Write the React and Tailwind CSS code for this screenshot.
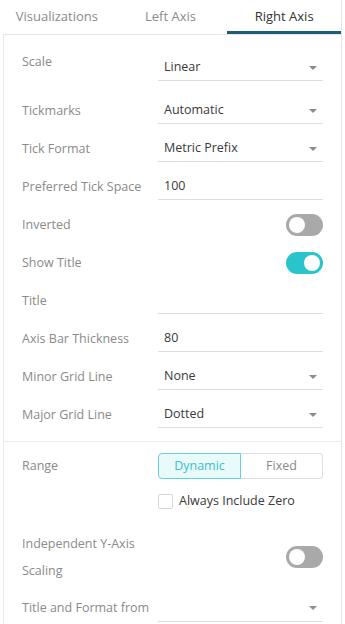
import React from "react";

const Caret = () => (
  <svg width="8" height="4" viewBox="0 0 8 4" className="shrink-0">
    <path d="M0 0 L8 0 L4 4 Z" fill="#8c8c8c" />
  </svg>
);

const Toggle = ({ on }) => (
  <div
    className={`w-[37px] h-[22px] rounded-full flex items-center px-[3px] ${
      on ? "bg-[#2ac5cc] justify-end" : "bg-[#a9a9a9] justify-start"
    }`}
  >
    <div className="w-[16px] h-[16px] rounded-full bg-white" />
  </div>
);

const Field = ({ value, select }) => (
  <div className="w-[165px] h-[26px] border-b border-[#dedede] flex items-center justify-between pl-[6px] pr-[6px] text-[#3a3a3a]">
    <span>{value}</span>
    {select && <Caret />}
  </div>
);

const Row = ({ label, children, className = "", labelClass = "" }) => (
  <div className={`h-[38px] flex items-center justify-between ${className}`}>
    <span className={`text-[#8a8a8a] ${labelClass}`}>{label}</span>
    {children}
  </div>
);

export default function App() {
  const tabs = ["Visualizations", "Left Axis", "Right Axis"];

  return (
    <div
      className="w-[345px] h-[624px] overflow-hidden bg-white text-[12.5px]"
      style={{ fontFamily: "'Open Sans', 'Liberation Sans', sans-serif" }}
    >
      <div className="w-[342px] h-full border-r border-[#e4e4e4] flex flex-col">
        {/* tabs */}
        <div className="h-[34px] flex shrink-0">
          {tabs.map((t, i) => (
            <div
              key={t}
              className={`flex-1 flex items-center justify-center text-[13px] pt-[3px] ${
                i === 2
                  ? "text-[#333] border-b-[3px] border-[#1d5b79]"
                  : "text-[#8a8a8a] pb-[3px]"
              }`}
            >
              {t}
            </div>
          ))}
        </div>

        <div className="ml-[3px] flex-1 border-l border-t border-[#e8e8e8]">
          <div className="px-[18px]">
            <Row label="Scale" className="mt-[14px]" labelClass="mb-[12px]">
              <Field value="Linear" select />
            </Row>
            <Row label="Tickmarks" className="mt-[5px]">
              <Field value="Automatic" select />
            </Row>
            <Row label="Tick Format">
              <Field value="Metric Prefix" select />
            </Row>
            <Row label="Preferred Tick Space">
              <Field value="100" />
            </Row>
            <Row label="Inverted">
              <Toggle />
            </Row>
            <Row label="Show Title">
              <Toggle on />
            </Row>
            <Row label="Title">
              <Field value="" />
            </Row>
            <Row label="Axis Bar Thickness">
              <Field value="80" />
            </Row>
            <Row label="Minor Grid Line">
              <Field value="None" select />
            </Row>
            <Row label="Major Grid Line">
              <Field value="Dotted" select />
            </Row>
          </div>

          <div className="mt-[7px] border-t border-[#ececec] px-[18px]">
            <div className="mt-[11px] h-[26px] flex items-center justify-between">
              <span className="text-[#8a8a8a]">Range</span>
              <div className="w-[165px] h-[26px] flex">
                <div className="flex-1 flex items-center justify-center rounded-l-[4px] border border-[#63d3d9] bg-[#e8fafa] text-[#3cbfc7]">
                  Dynamic
                </div>
                <div className="flex-1 flex items-center justify-center rounded-r-[4px] border border-l-0 border-[#e0e0e0] text-[#8a8a8a]">
                  Fixed
                </div>
              </div>
            </div>

            <div className="mt-[13px] flex justify-end">
              <div className="w-[165px] flex items-center gap-[6px]">
                <div className="w-[15px] h-[15px] border border-[#d6d6d6] rounded-[2px]" />
                <span className="text-[#3a3a3a]">Always Include Zero</span>
              </div>
            </div>

            <div className="mt-[19px] flex items-center justify-between">
              <span className="w-[130px] leading-[27px] text-[#8a8a8a]">
                Independent Y-Axis Scaling
              </span>
              <Toggle />
            </div>

            <div className="mt-[12px] h-[26px] flex items-center justify-between">
              <span className="text-[#8a8a8a]">Title and Format from</span>
              <div className="w-[165px] h-[26px] border-b border-[#dedede] flex items-center justify-end pr-[6px]">
                <Caret />
              </div>
            </div>
          </div>
        </div>
      </div>
    </div>
  );
}
